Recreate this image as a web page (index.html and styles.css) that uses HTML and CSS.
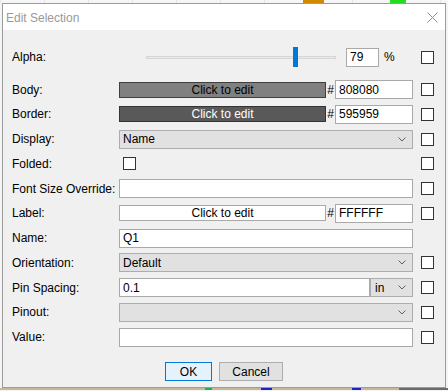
FILE: index.html
```html
<!DOCTYPE html>
<html lang="en">

<head>
    <meta charset="UTF-8">
    <title>Edit Selection</title>
    <link rel="stylesheet" href="styles.css">
</head>

<body>
    <div class="canvas-top"></div>

    <div class="window">
        <div class="titlebar">
            <span class="title">Edit Selection</span>
            <svg class="close" width="11" height="11" viewBox="0 0 11 11">
                <line x1="0.5" y1="0.5" x2="10.5" y2="10.5" stroke="#8c8c8c" stroke-width="1"></line>
                <line x1="10.5" y1="0.5" x2="0.5" y2="10.5" stroke="#8c8c8c" stroke-width="1"></line>
            </svg>
        </div>

        <div class="content">
            <div class="form">
                <!-- Прозрачность -->
                <div class="row alpha-row">
                    <label class="label">Alpha:</label>
                    <div class="control">
                        <div class="slider">
                            <div class="thumb"></div>
                        </div>
                        <input type="text" class="textbox alpha-box" value="79">
                        <span class="unit">%</span>
                    </div>
                    <span class="check"></span>
                </div>

                <div class="row">
                    <label class="label">Body:</label>
                    <div class="control">
                        <button class="color-button body-color">Click to edit</button>
                        <span class="hash">#</span>
                        <input type="text" class="textbox hex-box" value="808080">
                    </div>
                    <span class="check"></span>
                </div>

                <div class="row">
                    <label class="label">Border:</label>
                    <div class="control">
                        <button class="color-button border-color">Click to edit</button>
                        <span class="hash">#</span>
                        <input type="text" class="textbox hex-box" value="595959">
                    </div>
                    <span class="check"></span>
                </div>

                <div class="row">
                    <label class="label">Display:</label>
                    <div class="control">
                        <div class="combo">
                            <span>Name</span>
                            <svg class="chevron" width="8" height="5" viewBox="0 0 8 5">
                                <polyline points="0.5,0.5 4,4 7.5,0.5" fill="none" stroke="#606060" stroke-width="1"></polyline>
                            </svg>
                        </div>
                    </div>
                    <span class="check"></span>
                </div>

                <div class="row">
                    <label class="label">Folded:</label>
                    <div class="control">
                        <span class="check inline-check"></span>
                    </div>
                    <span class="check"></span>
                </div>

                <div class="row">
                    <label class="label">Font Size Override:</label>
                    <div class="control">
                        <input type="text" class="textbox wide" value="">
                    </div>
                    <span class="check"></span>
                </div>

                <div class="row">
                    <label class="label">Label:</label>
                    <div class="control">
                        <button class="color-button label-color">Click to edit</button>
                        <span class="hash">#</span>
                        <input type="text" class="textbox hex-box" value="FFFFFF">
                    </div>
                    <span class="check"></span>
                </div>

                <div class="row">
                    <label class="label">Name:</label>
                    <div class="control">
                        <input type="text" class="textbox wide" value="Q1">
                    </div>
                </div>

                <div class="row">
                    <label class="label">Orientation:</label>
                    <div class="control">
                        <div class="combo">
                            <span>Default</span>
                            <svg class="chevron" width="8" height="5" viewBox="0 0 8 5">
                                <polyline points="0.5,0.5 4,4 7.5,0.5" fill="none" stroke="#606060" stroke-width="1"></polyline>
                            </svg>
                        </div>
                    </div>
                    <span class="check"></span>
                </div>

                <div class="row">
                    <label class="label">Pin Spacing:</label>
                    <div class="control">
                        <input type="text" class="textbox pin-box" value="0.1">
                        <div class="combo unit-combo">
                            <span>in</span>
                            <svg class="chevron" width="8" height="5" viewBox="0 0 8 5">
                                <polyline points="0.5,0.5 4,4 7.5,0.5" fill="none" stroke="#606060" stroke-width="1"></polyline>
                            </svg>
                        </div>
                    </div>
                    <span class="check"></span>
                </div>

                <div class="row">
                    <label class="label">Pinout:</label>
                    <div class="control">
                        <div class="combo">
                            <span></span>
                            <svg class="chevron" width="8" height="5" viewBox="0 0 8 5">
                                <polyline points="0.5,0.5 4,4 7.5,0.5" fill="none" stroke="#606060" stroke-width="1"></polyline>
                            </svg>
                        </div>
                    </div>
                    <span class="check"></span>
                </div>

                <div class="row">
                    <label class="label">Value:</label>
                    <div class="control">
                        <input type="text" class="textbox wide" value="">
                    </div>
                    <span class="check"></span>
                </div>
            </div>

            <div class="buttons">
                <button class="dialog-button ok-button">OK</button>
                <button class="dialog-button">Cancel</button>
            </div>
        </div>
    </div>

    <div class="canvas-bottom"></div>
</body>

</html>
```

FILE: styles.css
```css
/* Фон холста и окно диалога */
body {
    margin: 0;
    padding: 0;
    font-family: 'Liberation Sans', Arial, sans-serif;
    font-size: 12px;
    color: #000;
    background-color: #f4f4f4;
}

.canvas-top {
    height: 3px;
    background:
        linear-gradient(90deg, transparent 303px, #d08a00 303px, #d08a00 324px, transparent 324px,
            transparent 390px, #22dd22 390px, #22dd22 406px, transparent 406px),
        repeating-linear-gradient(90deg, #e6e6e6 0, #e6e6e6 1px, #f6f6f6 1px, #f6f6f6 44px);
}

.canvas-bottom {
    height: 2px;
    background:
        linear-gradient(90deg, #c8b89a 0, #c8b89a 205px, #1bb34a 205px, #1bb34a 212px, #c8b89a 212px,
            #c8b89a 261px, #1a22c8 261px, #1a22c8 272px, #c8b89a 272px,
            #c8b89a 352px, #1a22c8 352px, #1a22c8 361px, #c8b89a 361px,
            #c8b89a 399px, #6a6a6a 399px);
}

.window {
    width: 444px;
    margin-left: 2px;
    box-sizing: border-box;
    border: 1px solid #9b9b9b;
    background: #f0f0f0;
}

.titlebar {
    height: 26px;
    background: #fff;
    display: flex;
    align-items: center;
    justify-content: space-between;
    padding: 0 7px 0 3px;
}

.title {
    color: #999;
    font-size: 12px;
    padding-top: 1px;
}

.close {
    display: block;
    margin-top: 1px;
}

.content {
    padding: 17px 0 6px 9px;
}

/* Строки формы */
.form {
    display: flex;
    flex-direction: column;
    gap: 5.75px;
}

.row {
    display: flex;
    align-items: center;
    height: 19px;
}

.alpha-row {
    height: 20px;
    margin-bottom: 7.25px;
}

.label {
    width: 107px;
    flex: none;
}

.control {
    width: 294px;
    flex: none;
    display: flex;
    align-items: center;
    height: 100%;
}

.check {
    width: 13px;
    height: 13px;
    box-sizing: border-box;
    border: 1px solid #333;
    background: #fff;
    margin-left: 8px;
    flex: none;
}

.inline-check {
    margin-left: 4px;
}

.textbox {
    height: 19px;
    box-sizing: border-box;
    border: 1px solid #a9a9a9;
    background: #fff;
    font-family: inherit;
    font-size: 12px;
    padding: 0 3px;
    margin: 0;
    color: #000;
}

.wide {
    width: 294px;
}

/* Ползунок */
.slider {
    position: relative;
    width: 190px;
    height: 3px;
    margin-left: 27px;
    box-sizing: border-box;
    border: 1px solid #d6d6d6;
    background: #e7eaea;
}

.slider .thumb {
    position: absolute;
    left: 146px;
    top: -10px;
    width: 5px;
    height: 20px;
    background: #0078d7;
}

.alpha-box {
    width: 33px;
    margin-left: 10px;
}

.unit {
    margin-left: 5px;
}

/* Кнопки выбора цвета */
.color-button {
    width: 207px;
    height: 16px;
    box-sizing: border-box;
    padding: 0;
    font-family: inherit;
    font-size: 12px;
    line-height: 14px;
}

.body-color {
    background: #808080;
    border: 1px solid #3f3f3f;
    color: #000;
}

.border-color {
    background: #595959;
    border: 1px solid #333;
    color: #fff;
}

.label-color {
    background: #fff;
    border: 1px solid #a9a9a9;
    color: #000;
}

.hash {
    width: 9px;
    text-align: center;
}

.hex-box {
    width: 78px;
}

/* Выпадающие списки */
.combo {
    width: 294px;
    height: 19px;
    box-sizing: border-box;
    border: 1px solid #adadad;
    background: #e1e1e1;
    display: flex;
    align-items: center;
    justify-content: space-between;
    padding: 0 6px 0 3px;
}

.chevron {
    display: block;
}

.pin-box {
    width: 251px;
}

.unit-combo {
    width: 43px;
    padding-left: 4px;
}

/* Кнопки диалога */
.buttons {
    display: flex;
    justify-content: center;
    gap: 7px;
    margin-top: 15.5px;
    padding-right: 9px;
}

.dialog-button {
    height: 19px;
    width: 64px;
    box-sizing: border-box;
    border: 1px solid #adadad;
    background: #e1e1e1;
    font-family: inherit;
    font-size: 12px;
    padding: 0;
    color: #000;
}

.ok-button {
    width: 47px;
    border-color: #0078d7;
    background: #e5f1fb;
}
```
